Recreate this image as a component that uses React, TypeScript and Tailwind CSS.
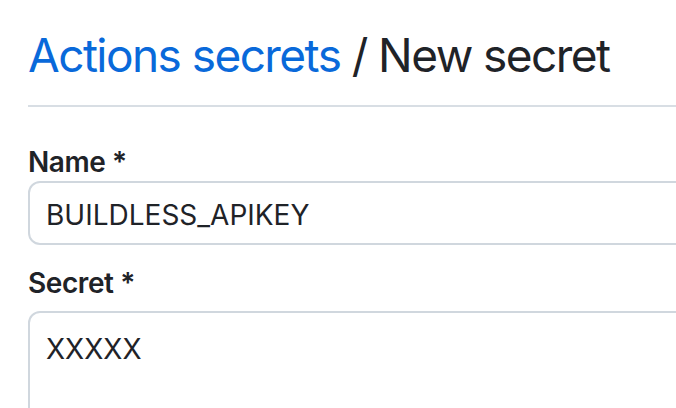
export default function App() {
  return (
    <div className="w-[676px] h-[408px] overflow-hidden bg-white font-['Inter',sans-serif] text-[#1f2328]">
      <div className="w-[760px] pl-[28px]">
        {/* Subhead */}
        <div className="pt-[19px] pb-[14px] border-b-2 border-[#d8dee4]">
          <h2 className="text-[46px] leading-[72px] font-normal tracking-[-0.034em]">
            <a href="#" className="text-[#0969da]">Actions secrets</a> / New secret
          </h2>
        </div>

        <form className="mt-[37px]">
          <label className="block text-[28px] leading-[36px] font-semibold tracking-[-0.015em]">Name *</label>
          <div className="mt-[1px] h-[64px] flex items-center pt-[4px] px-[16px] border-2 border-[#d0d7de] rounded-[12px] text-[28px] leading-[42px]">
            BUILDLESS_APIKEY
          </div>

          <label className="block mt-[20px] text-[28px] leading-[36px] font-semibold tracking-[-0.015em]">Secret *</label>
          <div className="mt-[10px] h-[200px] pt-[15px] px-[16px] border-2 border-[#d0d7de] rounded-[12px] text-[28px] leading-[42px]">
            XXXXX
          </div>
        </form>
      </div>
    </div>
  );
}
